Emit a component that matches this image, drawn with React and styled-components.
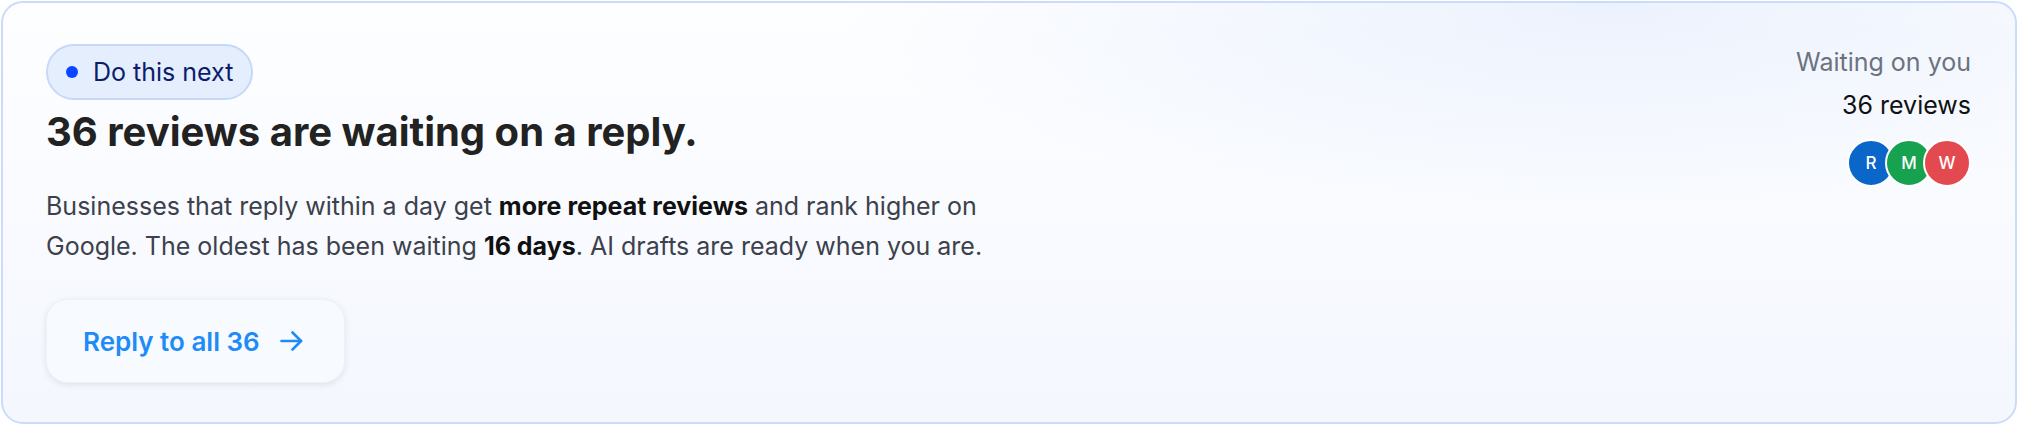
import React from "react";
import styled, { createGlobalStyle } from "styled-components";

const GlobalStyle = createGlobalStyle`
  html, body {
    margin: 0;
    padding: 0;
    background: #ffffff;
  }
  body {
    font-family: "Inter", "Noto Sans", sans-serif;
    -webkit-font-smoothing: antialiased;
  }
`;

const Page = styled.div`
  padding: 1px;
`;

const Card = styled.section`
  display: flex;
  justify-content: space-between;
  align-items: flex-start;
  box-sizing: border-box;
  width: 100%;
  padding: 41px 44px 39px 43px;
  border: 2px solid #cadcfa;
  border-radius: 22px;
  background:
    radial-gradient(ellipse 55% 70% at 80% 0%, rgba(222, 232, 252, 0.55), rgba(222, 232, 252, 0) 70%),
    linear-gradient(180deg, #fdfeff 0%, #f9fbff 45%, #f4f7fe 100%);
`;

const Main = styled.div`
  display: flex;
  flex-direction: column;
  align-items: flex-start;
`;

const Badge = styled.span`
  display: inline-flex;
  align-items: center;
  gap: 15px;
  box-sizing: border-box;
  height: 56px;
  padding: 0 18px;
  border: 2px solid #c5d9fb;
  border-radius: 999px;
  background: #e4eefd;
  color: #0b1d6b;
  font-size: 25px;
  font-weight: 400;
`;

const Dot = styled.span`
  width: 12px;
  height: 12px;
  border-radius: 50%;
  background: #0a46ff;
`;

const Title = styled.h2`
  margin: 8px 0 0;
  font-size: 40px;
  line-height: 48px;
  font-weight: 700;
  color: #222222;
`;

const Lead = styled.p`
  margin: 30px 0 0;
  max-width: 990px;
  font-size: 25px;
  line-height: 40px;
  color: #3c414b;

  strong {
    font-weight: 700;
    color: #111111;
  }
`;

const ActionButton = styled.button`
  display: inline-flex;
  align-items: center;
  gap: 20px;
  box-sizing: border-box;
  height: 84px;
  margin-top: 33px;
  padding: 0 41px 0 36px;
  border: 1px solid rgba(15, 40, 90, 0.04);
  border-radius: 22px;
  background: #f7faff;
  box-shadow: 0 2px 6px rgba(20, 40, 80, 0.1);
  color: #1e8cf6;
  font-family: inherit;
  font-size: 26px;
  font-weight: 600;
  cursor: pointer;
`;

const Arrow = () => (
  <svg width="23" height="20" viewBox="0 0 23 20" fill="none" stroke="currentColor"
    strokeWidth="2.6" strokeLinecap="round" strokeLinejoin="round">
    <path d="M1.5 10H21" />
    <path d="M12.5 1.5L21 10L12.5 18.5" />
  </svg>
);

const Side = styled.aside`
  display: flex;
  flex-direction: column;
  align-items: flex-end;
`;

const SideLabel = styled.div`
  font-size: 25px;
  line-height: 36px;
  color: #6c727e;
`;

const SideValue = styled.div`
  margin-top: 7px;
  font-size: 25px;
  line-height: 36px;
  color: #111111;
`;

const Avatars = styled.div`
  display: flex;
  margin-top: 16px;
`;

const Avatar = styled.span`
  display: flex;
  align-items: center;
  justify-content: center;
  box-sizing: border-box;
  width: 48px;
  height: 48px;
  border-radius: 50%;
  border: 2px solid #ffffff;
  background: ${(p) => p.$color};
  color: #ffffff;
  font-size: 17px;
  font-weight: 500;

  & + & {
    margin-left: -10px;
  }
`;

const people = [
  { initial: "R", color: "#0a66c9" },
  { initial: "M", color: "#17a24f" },
  { initial: "W", color: "#e34a50" },
];

const App = () => {
  return (
    <Page>
      <GlobalStyle />
      <Card>
        <Main>
          <Badge>
            <Dot />
            Do this next
          </Badge>
          <Title>36 reviews are waiting on a reply.</Title>
          <Lead>
            Businesses that reply within a day get <strong>more repeat reviews</strong> and rank
            higher on Google. The oldest has been waiting <strong>16 days</strong>. AI drafts are
            ready when you are.
          </Lead>
          <ActionButton>
            Reply to all 36
            <Arrow />
          </ActionButton>
        </Main>
        <Side>
          <SideLabel>Waiting on you</SideLabel>
          <SideValue>36 reviews</SideValue>
          <Avatars>
            {people.map((p) => (
              <Avatar key={p.initial} $color={p.color}>
                {p.initial}
              </Avatar>
            ))}
          </Avatars>
        </Side>
      </Card>
    </Page>
  );
};

export default App;
